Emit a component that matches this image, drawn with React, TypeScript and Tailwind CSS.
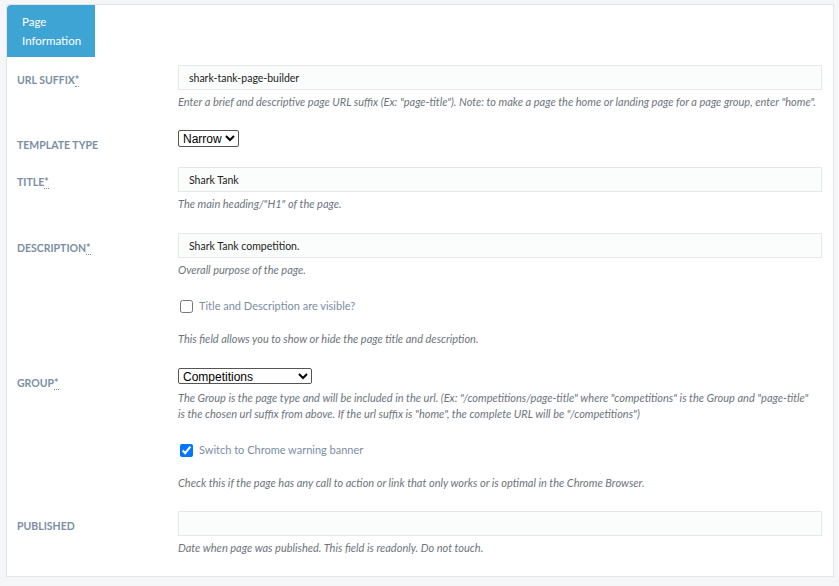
import React from 'react';

const font = { fontFamily: 'Lato, "Noto Sans", sans-serif' };

const Label = ({ text, req }: { text: string; req?: boolean }) => (
  <div className="w-[161px] shrink-0 pt-[7px] text-[10.5px] font-bold uppercase leading-[16px] text-[#7b8ea3]">
    {text}
    {req && <abbr className="border-b border-dotted border-[#7b8ea3] leading-none no-underline">*</abbr>}
  </div>
);

const Help = ({ children, mt = 'mt-[4px]', extra = '' }: { children: React.ReactNode; mt?: string; extra?: string }) => (
  <p className={`${mt} ${extra} text-[11px] italic leading-[16px] text-[#6c757d]`}>{children}</p>
);

const TextInput = ({ value }: { value: string }) => (
  <input
    readOnly
    value={value}
    className="block h-[25px] w-full border border-[#e4e8eb] bg-[#fbfcfc] px-[10px] text-[10.5px] text-[#222] outline-none"
  />
);

const Check = ({ label, checked }: { label: string; checked?: boolean }) => (
  <label className="mt-[19px] flex h-[18px] items-center gap-[6px] pl-[2px] text-[11px] text-[#7b8ea3]">
    <input type="checkbox" defaultChecked={checked} className="h-[13px] w-[13px]" style={{ appearance: 'auto' }} />
    {label}
  </label>
);

const selectFont = { fontFamily: '"Liberation Sans", Arial, sans-serif', appearance: 'auto' as const };

const App: React.FC = () => {
  return (
    <div className="min-h-[586px] bg-[#f5f6f8] pl-[6px] pr-[5px] pt-[4px]" style={font}>
      <div className="border border-[#e3e6e9] bg-white pb-[20px]">
        <div className="w-[88px] rounded-tl-[4px] bg-[#3ea4d4] px-[15px] pt-[7px] pb-[7px] text-[11.5px] leading-[19px] text-white">
          Page Information
        </div>

        <div className="pl-[10px] pr-[11px]">
          <div className="mt-[8px] flex">
            <Label text="URL SUFFIX" req />
            <div className="flex-1">
              <TextInput value="shark-tank-page-builder" />
              <Help>
                Enter a brief and descriptive page URL suffix (Ex: "page-title"). Note: to make a page the home or landing page for a page group, enter "home".
              </Help>
            </div>
          </div>

          <div className="mt-[20px] flex">
            <Label text="TEMPLATE TYPE" />
            <div className="flex-1">
              <select
                defaultValue="Narrow"
                className="block h-[17px] rounded-[2px] border border-[#555] px-0 text-[12px] leading-none text-black"
                style={selectFont}
              >
                <option>Narrow</option>
                <option>Wide</option>
              </select>
            </div>
          </div>

          <div className="mt-[14px] flex">
            <Label text="TITLE" req />
            <div className="flex-1">
              <TextInput value="Shark Tank" />
              <Help>The main heading/"H1" of the page.</Help>
            </div>
          </div>

          <div className="mt-[21px] flex">
            <Label text="DESCRIPTION" req />
            <div className="flex-1">
              <TextInput value="Shark Tank competition." />
              <Help>Overall purpose of the page.</Help>
              <Check label="Title and Description are visible?" />
              <Help mt="mt-[16px]">This field allows you to show or hide the page title and description.</Help>
            </div>
          </div>

          <div className="mt-[21px] flex">
            <Label text="GROUP" req />
            <div className="flex-1">
              <select
                defaultValue="Competitions"
                className="block h-[16px] w-[134px] rounded-[2px] border border-[#555] px-0 text-[12px] leading-none text-black"
                style={selectFont}
              >
                <option>Competitions</option>
                <option>Events</option>
              </select>
              <Help mt="mt-[6px]" extra="pr-[6px]">
                The Group is the page type and will be included in the url. (Ex: "/competitions/page-title" where "competitions" is the Group and "page-title" is the chosen url suffix from above. If the url suffix is "home", the complete URL will be "/competitions")
              </Help>
              <Check label="Switch to Chrome warning banner" checked />
              <Help mt="mt-[16px]">
                Check this if the page has any call to action or link that only works or is optimal in the Chrome Browser.
              </Help>
            </div>
          </div>

          <div className="mt-[20px] flex">
            <Label text="PUBLISHED" />
            <div className="flex-1">
              <TextInput value="" />
              <Help>Date when page was published. This field is readonly. Do not touch.</Help>
            </div>
          </div>
        </div>
      </div>
    </div>
  );
};

export default App;
